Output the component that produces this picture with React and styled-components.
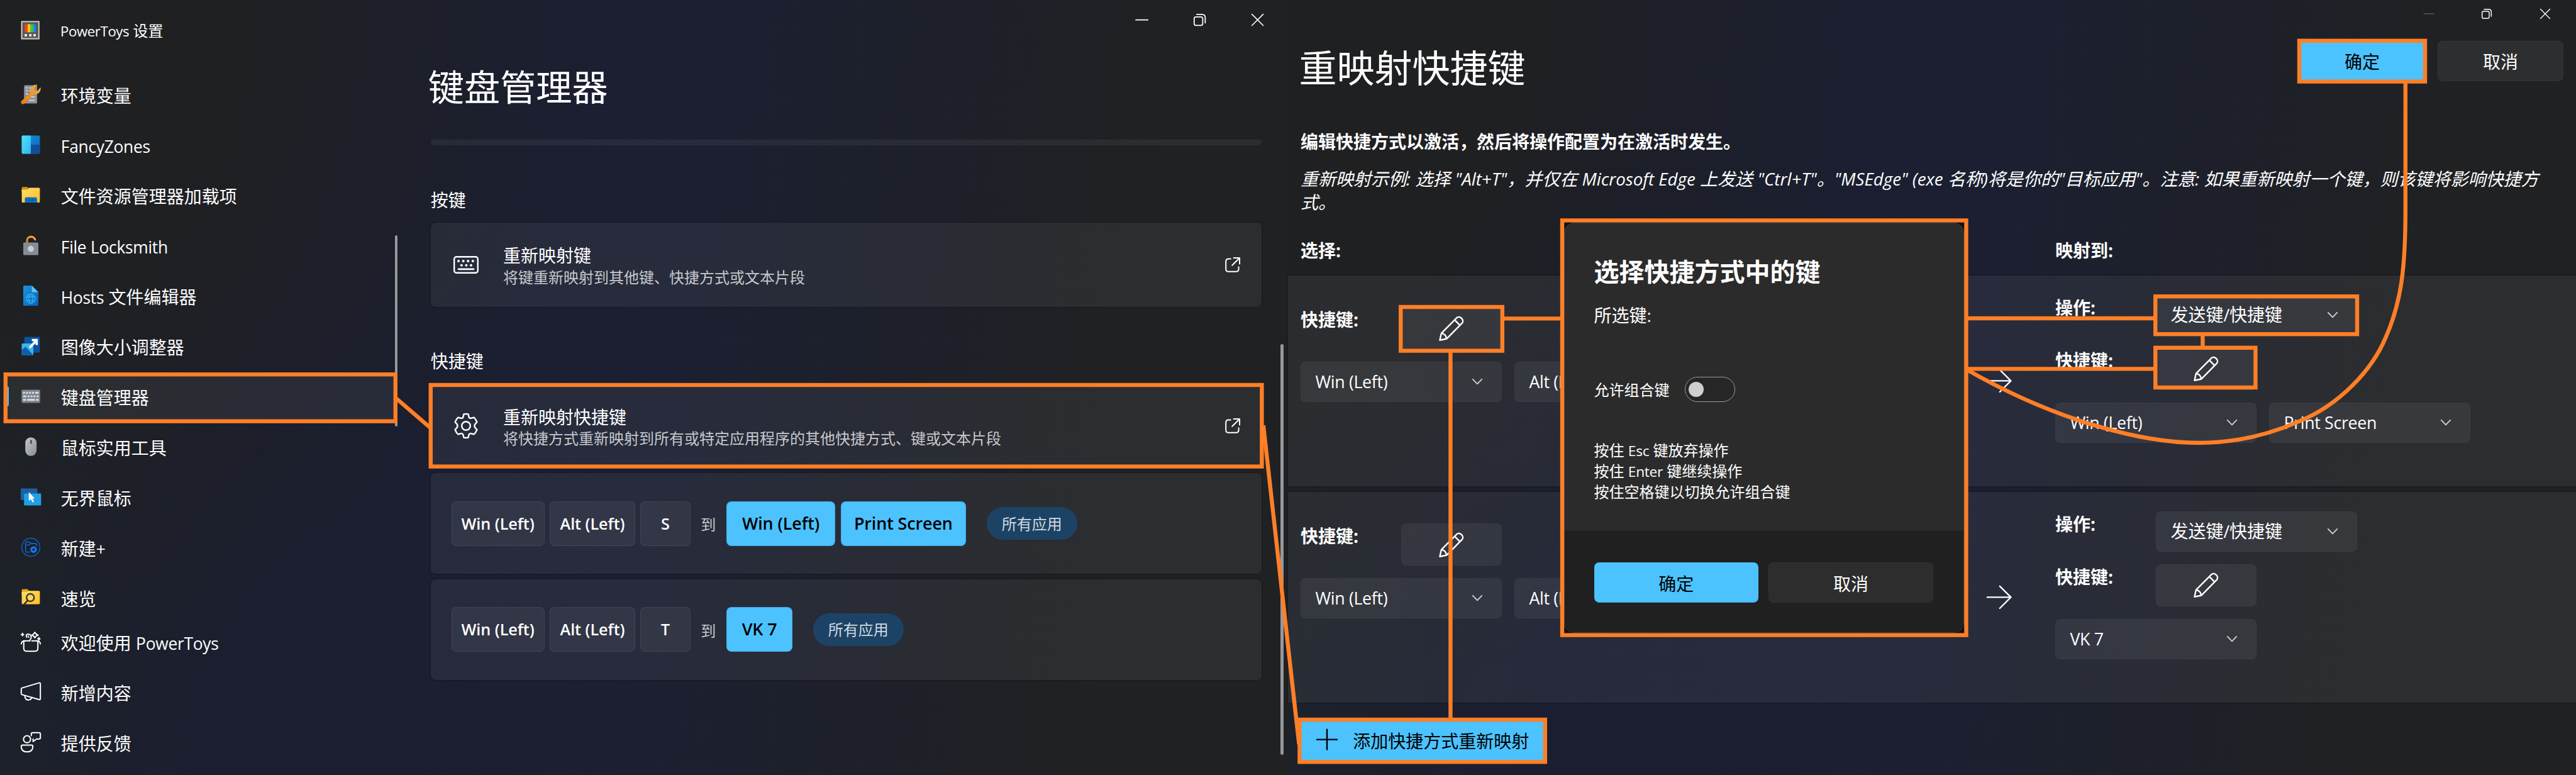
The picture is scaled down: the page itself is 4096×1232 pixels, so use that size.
import React from "react";
import styled, { createGlobalStyle, css } from "styled-components";

/* 1rem = 8px, so every length below is a design pixel divided by ten. */
const Global = createGlobalStyle`
  html { font-size: 8px; }
  body { margin: 0; background: #1f2022; overflow: hidden; }
  * { box-sizing: border-box; }
  button { font: inherit; }
`;

const ORANGE = "#ff7f27";
const BLUE = "#4cc2ff";

const Desktop = styled.div`
  position: relative;
  display: grid;
  grid-template-columns: 256rem 256rem;
  width: 512rem;
  height: 154rem;
  overflow: hidden;
  color: #fff;
  font-family: "Open Sans", "Noto Sans CJK SC", sans-serif;
  font-size: 3.5rem;
  line-height: 4.6rem;
  white-space: nowrap;
`;

const Latin = styled.span`
  font-size: ${(p) => p.$size}em;
  letter-spacing: ${(p) => p.$track}em;
`;

const Label = ({ children, size = 0.945, track = -0.012 }) =>
  children.split(/([\x21-\x7e]+(?: +[\x21-\x7e]+)*)/).map((part, i) =>
    i % 2 ? (
      <Latin key={i} $size={size} $track={track}>
        {part}
      </Latin>
    ) : (
      part
    )
  );

/* ---------- shared ---------- */

const Window = styled.section`
  position: relative;
  display: flex;
  min-width: 0;
  height: 154rem;
  background: radial-gradient(
      ellipse 46% 92% at 0 0,
      #1f2022 35%,
      rgba(31, 32, 34, 0) 100%
    ),
    linear-gradient(
      97deg,
      #1d2228 0%,
      #1c202c 12%,
      #1a1e30 24%,
      #1b1f31 52%,
      #1d202a 68%,
      #202123 85%
    );
`;

const CaptionBar = styled.div`
  display: flex;
  align-items: center;
  justify-content: flex-end;
  height: ${(p) => p.$height}rem;
  gap: ${(p) => p.$gap}rem;
  padding-right: ${(p) => p.$right}rem;
`;

const Glyph = styled.svg`
  display: block;
  flex: none;
  width: ${(p) => p.$w}rem;
  height: ${(p) => p.$h || p.$w}rem;
  fill: none;
  stroke: ${(p) => p.$color || "currentColor"};
  stroke-width: ${(p) => p.$stroke || 2.5};
  stroke-linecap: round;
  stroke-linejoin: round;
  overflow: visible;
`;

const CaptionButtons = ({ size, dim, height, gap, right }) => (
  <CaptionBar $height={height} $gap={gap} $right={right}>
    <Glyph viewBox="0 0 24 24" $w={size} $color={dim ? "#55565a" : "#fff"} $stroke={2.2}>
      <path d="M0 12H24" />
    </Glyph>
    <Glyph viewBox="0 0 24 24" $w={size} $color="#fff" $stroke={2.2}>
      <rect x="1" y="6" width="17" height="17" rx="3.5" />
      <path d="M6 1.2H16.5Q23 1.2 23 8V18" />
    </Glyph>
    <Glyph viewBox="0 0 24 24" $w={size} $color="#fff" $stroke={2}>
      <path d="M.8.8 23.2 23.2M23.2.8.8 23.2" />
    </Glyph>
  </CaptionBar>
);

const ScrollThumb = styled.div`
  flex: none;
  width: 0.55rem;
  height: ${(p) => p.$length}rem;
  margin: ${(p) => p.$top}rem 0 0 ${(p) => p.$left || 0}rem;
  border-radius: 0.3rem;
  background: #97989b;
`;

/* ---------- sidebar ---------- */

const Sidebar = styled.nav`
  display: flex;
  flex: none;
  width: 80rem;
`;

const SidebarColumn = styled.div`
  width: 78.5rem;
`;

const AppTitle = styled.div`
  display: flex;
  align-items: center;
  gap: 3.9rem;
  height: 13.75rem;
  padding: 0 0 1.75rem 4.1rem;
  font-size: 3rem;
`;

const AppName = styled.span`
  padding-top: 0.5rem;
`;

const NavList = styled.div`
  height: ${(p) => p.$height || 30}rem;
`;

const NavItem = styled.div`
  display: flex;
  align-items: center;
  gap: 4rem;
  height: 9rem;
  margin: 0 0 1rem 1rem;
  padding-left: 3.1rem;
  border-radius: 1rem;
  ${(p) =>
    p.$active &&
    css`
      padding-left: 0;
      gap: 0;
      background: rgba(255, 255, 255, 0.06);
    `}
  &:first-child {
    margin-top: 0.5rem;
  }
`;

const ActiveBar = styled.i`
  width: 0.8rem;
  height: 4rem;
  margin-right: 2.3rem;
  border-radius: 0.4rem;
  background: ${BLUE};
`;

const NavText = styled.span`
  padding-top: 0.6rem;
  margin-left: ${(p) => (p.$active ? 4 : 0)}rem;
`;

const Art = styled.svg`
  display: block;
  flex: none;
  width: 4rem;
  height: 4rem;
  overflow: visible;
`;

const Defs = () => (
  <defs>
    <linearGradient id="orange" x1="0" y1="1" x2="1" y2="0">
      <stop offset="0" stopColor="#e97a0c" />
      <stop offset="1" stopColor="#fbb03b" />
    </linearGradient>
    <linearGradient id="cyan" x1="0" y1="0" x2="1" y2="1">
      <stop offset="0" stopColor="#50e2fb" />
      <stop offset="1" stopColor="#2fb4ea" />
    </linearGradient>
    <linearGradient id="blue" x1="0" y1="0" x2="1" y2="1">
      <stop offset="0" stopColor="#1c93e0" />
      <stop offset="1" stopColor="#0a62b8" />
    </linearGradient>
    <linearGradient id="grey" x1="0" y1="0" x2="1" y2="1">
      <stop offset="0" stopColor="#c3c8ce" />
      <stop offset="1" stopColor="#868d95" />
    </linearGradient>
    <linearGradient id="yellow" x1="0" y1="0" x2="1" y2="1">
      <stop offset="0" stopColor="#ffdc6b" />
      <stop offset="1" stopColor="#fcc024" />
    </linearGradient>
    <linearGradient id="rainbow" x1="0" y1="0" x2="1" y2="0">
      <stop offset=".25" stopColor="#e8481c" />
      <stop offset=".25" stopColor="#fdc010" />
      <stop offset=".5" stopColor="#fdd010" />
      <stop offset=".5" stopColor="#5fc43a" />
      <stop offset=".75" stopColor="#45b53a" />
      <stop offset=".75" stopColor="#1d9bf0" />
      <stop offset="1" stopColor="#1279d8" />
    </linearGradient>
  </defs>
);

const LogoArt = () => (
  <Art viewBox="0 0 40 40">
    <Defs />
    <rect x="2" y="3" width="34" height="34" fill="#54575c" stroke="#dbd3c0" strokeWidth="2.4" />
    <rect x="7.5" y="8" width="23" height="16" fill="url(#rainbow)" />
    <path d="M7.5 27.5h5v5h-5zM16.5 27.5h5v5h-5zM25 27.5h5v5h-5z" fill="#e8e0cf" />
  </Art>
);

const WrenchArt = () => (
  <Art viewBox="0 0 40 40">
    <rect x="6.5" y="2" width="26" height="36" rx="2" fill="#8a9199" />
    <path d="M10 7h4M17 7h4M10 13h4M17 13h4M10 19h4M19 25h9M16 32h12" stroke="#c9cdd2" strokeWidth="3" />
    <path
      d="M1.5 33 20 16C17.5 7 24 0 33 .5L27 7V13H33L39.5 6C41 15 34 21.5 25.5 20L7.5 38.5C4 41.5-2 37 1.5 33Z"
      fill="url(#orange)"
    />
  </Art>
);

const ZonesArt = () => (
  <Art viewBox="0 0 40 40">
    <rect x="2" y="2" width="36" height="36" rx="2" fill="url(#blue)" />
    <path d="M20 20H38V36a2 2 0 0 1-2 2H20Z" fill="#0f4f97" />
    <path d="M4 2H20V38H4a2 2 0 0 1-2-2V4a2 2 0 0 1 2-2Z" fill="url(#cyan)" />
  </Art>
);

const FolderArt = () => (
  <Art viewBox="0 0 40 40">
    <path d="M2 6a2 2 0 0 1 2-2H13l4 4V14H2Z" fill="#d9920a" />
    <path d="M2 9.5H13L17 5.5H36a2 2 0 0 1 2 2V33a2 2 0 0 1-2 2H4a2 2 0 0 1-2-2Z" fill="url(#yellow)" />
    <path d="M8 35V28a3.5 3.5 0 0 1 3.5-3.5H29A3.5 3.5 0 0 1 32.5 28V35Z" fill="#0f73c8" />
    <path d="M13 30H28" stroke="#0a4d93" strokeWidth="2" />
  </Art>
);

const LockArt = () => (
  <Art viewBox="0 0 40 40">
    <path d="M12.5 16V10.5C12.5 1 26 .5 28.5 8.5" fill="none" stroke="url(#orange)" strokeWidth="4" strokeLinecap="round" />
    <rect x="5" y="14.5" width="30" height="25" rx="2" fill="#868c93" />
    <circle cx="20" cy="27" r="6" fill="#c9ced6" />
  </Art>
);

const HostsArt = () => (
  <Art viewBox="0 0 40 40">
    <path d="M6 0H22L35 13V38a2 2 0 0 1-2 2H7a2 2 0 0 1-2-2V2Z" fill="url(#blue)" />
    <path d="M22 0 35 13H22Z" fill="#5cc4f5" />
    <g fill="none" stroke="#35aeea" strokeWidth="1.6">
      <circle cx="20" cy="26" r="9" />
      <ellipse cx="20" cy="26" rx="4" ry="9" />
      <path d="M12 22.5H28M12 29.5H28" />
    </g>
  </Art>
);

const ResizeArt = () => (
  <Art viewBox="0 0 40 40">
    <rect x="7" y="2" width="31" height="31" rx="2" fill="#0b529f" />
    <rect x="2" y="15" width="23" height="23" rx="1.5" fill="#3bb5ee" />
    <path d="M2 28 9.5 21.5 25 38H4a2 2 0 0 1-2-2Z" fill="#0d5eae" />
    <path d="M16 22 19 25 29.5 14.5V18H34V6H22V10.5H26.5Z" fill="#fff" />
  </Art>
);

const KeyboardArt = () => (
  <Art viewBox="0 0 40 40">
    <rect x="1.5" y="7" width="37" height="26" rx="2" fill="#7b828b" />
    <path
      d="M4.5 13H8.5M10.5 13H14.5M16.5 13H20.5M22.5 13H26.5M28.5 13H35.5M4.5 20H11.5M13.5 20H17.5M19.5 20H23.5M25.5 20H29.5M31.5 20H35.5M4.5 27H10.5M12.5 27H28.5M30.5 27H35.5"
      stroke="#d4d9df"
      strokeWidth="4"
    />
  </Art>
);

const MouseArt = () => (
  <Art viewBox="0 0 40 40">
    <rect x="9" y="1.5" width="22.5" height="37" rx="11" fill="url(#grey)" />
    <rect x="19" y="6.5" width="3" height="8" rx="1.5" fill="#3d4248" />
  </Art>
);

const BordersArt = () => (
  <Art viewBox="0 0 40 40">
    <rect x="0" y="3" width="33" height="23" rx="1.5" fill="#1d5fa3" />
    <rect x="6.5" y="13" width="34" height="24" rx="1.5" fill="#1fa0e4" />
    <path d="M16 10V28L20 24.5 23.5 31 26.5 29.5 23.5 23H28Z" fill="#f4f7fa" />
  </Art>
);

const NewArt = () => (
  <Art viewBox="0 0 40 40" fill="none">
    <circle cx="20" cy="20" r="18" stroke="#1357b3" strokeWidth="2" />
    <path
      d="M18 29.5H12.5a3 3 0 0 1-3-3V12.5a3 3 0 0 1 3-3H17L20 12.5H28.5a3 3 0 0 1 3 3V18M9.500 15.500H17L20 12.500"
      stroke="#0f6fe8"
      strokeWidth="1.8"
    />
    <circle cx="25.5" cy="24.5" r="6.5" fill="#1479f5" />
    <path d="M25.5 21.5V27.5M22.5 24.5H28.5" stroke="#10182c" strokeWidth="1.8" />
  </Art>
);

const PeekArt = () => (
  <Art viewBox="0 0 40 40">
    <path d="M2 5a2 2 0 0 1 2-2H13l4 4V14H2Z" fill="#e8a512" />
    <path d="M2 8.5H13L16 6.5H36a2 2 0 0 1 2 2V31a2 2 0 0 1-2 2H4a2 2 0 0 1-2-2Z" fill="url(#yellow)" />
    <circle cx="19" cy="20" r="7.5" fill="#f8d469" stroke="#3d3528" strokeWidth="3" />
    <path d="M13.5 26 7 33" stroke="#2c2822" strokeWidth="3" strokeLinecap="round" />
  </Art>
);

const WelcomeGlyph = () => (
  <Glyph viewBox="0 0 40 40" $w={4}>
    <path d="M1 24.5C1.5 20.5 3.5 18.5 8 18.5M32 18.5C36.5 18.5 38.5 20.5 39 24.5" />
    <path d="M6 18.5V33.5Q6 39 11.5 39H28.500Q34 39 34 33.500V18.500M8 18.500H18M22 18.500H32" />
    <path d="M11.5 11C9.500 6.500 13 4 17 5.5C22 7.5 22 13 17.5 18" />
    <path d="M16.500 11.5Q13.5 11.5 15 8.5" strokeWidth="2" />
    <path d="M28 1.5 30.500 5 34.5 7 30.500 9 28 12.5 25.500 9 22 7 25.500 5Z" />
    <path d="M3.5 3.500V8.500M1.200 6H5.800M36 12V17M33.7 14.5H38.3" />
  </Glyph>
);

const MegaphoneGlyph = () => (
  <Glyph viewBox="0 0 40 40" $w={4}>
    <path d="M2.5 12 36 2Q39 1.2 39 4V33Q39 36 36 35L3 25.5Q1 25 1 23V14Q1 12.5 2.5 12Z" />
    <path d="M8 27.5C8.5 34 12 36.5 15.5 36C19 35.5 21 33.5 22 31" />
  </Glyph>
);

const FeedbackGlyph = () => (
  <Glyph viewBox="0 0 40 40" $w={4}>
    <circle cx="12.5" cy="14" r="7" />
    <path d="M3.5 25.5H22Q24 25.5 24 28C24 35 20 39 12.5 39C5 39 1 35 1 28Q1 25.5 3.5 25.5Z" />
    <path d="M21 7V3Q21 .8 23.5 .8H36.5Q39 .8 39 3.5V11Q39 13.5 36.5 13.5H31.5L24.5 18.5V13.5" />
  </Glyph>
);

const navItems = [
  ["环境变量", WrenchArt],
  ["FancyZones", ZonesArt],
  ["文件资源管理器加载项", FolderArt],
  ["File Locksmith", LockArt],
  ["Hosts 文件编辑器", HostsArt],
  ["图像大小调整器", ResizeArt],
  ["键盘管理器", KeyboardArt, true],
  ["鼠标实用工具", MouseArt],
  ["无界鼠标", BordersArt],
  ["新建+", NewArt],
  ["速览", PeekArt],
];

const footerItems = [
  ["欢迎使用 PowerToys", WelcomeGlyph],
  ["新增内容", MegaphoneGlyph],
  ["提供反馈", FeedbackGlyph],
];

const NavRows = ({ items }) =>
  items.map(([text, Icon, active]) => (
    <NavItem key={text} $active={active}>
      {active && <ActiveBar />}
      <Icon />
      <NavText $active={active}>
        <Label>{text}</Label>
      </NavText>
    </NavItem>
  ));

/* ---------- settings page ---------- */

const Page = styled.main`
  width: 176rem;
`;

const PageBody = styled.div`
  display: flex;
  padding-left: 5.6rem;
`;

const PageContent = styled.div`
  width: 165.1rem;
`;

const PageTitle = styled.h1`
  margin: 4.5rem 0 5.4rem -0.5rem;
  font-size: 7.15rem;
  font-weight: 400;
  line-height: 10rem;
`;

const surface = css`
  background: rgba(255, 255, 255, 0.053);
  box-shadow: 0 0 0 0.25rem rgba(0, 0, 0, 0.13);
`;

const ScrolledCard = styled.div`
  height: 1.2rem;
  border-radius: 0 0 0.8rem 0.8rem;
  background: rgba(255, 255, 255, 0.053);
`;

const SectionLabel = styled.h2`
  margin: 0;
  padding: 8.35rem 0 1.95rem;
  font-size: 3.5rem;
  font-weight: 400;
  line-height: 5rem;
`;

const LinkCard = styled.div`
  display: flex;
  align-items: center;
  height: 16.75rem;
  padding: 0 4.2rem 0 4.5rem;
  border-radius: 0.9rem;
  ${surface}
`;

const CardText = styled.div`
  flex: 1;
  padding: 0.5rem 0 0 4.9rem;
  line-height: 4.5rem;
`;

const CardHint = styled.div`
  padding-top: 0.1rem;
  font-size: 3rem;
  line-height: 4rem;
  color: #c6c8cc;
`;

const MappingCard = styled.div`
  display: flex;
  align-items: center;
  height: 20rem;
  margin-top: 1.05rem;
  padding-left: 4.1rem;
  border-radius: 0.9rem;
  ${surface}
`;

const KeyGroup = styled.div`
  display: flex;
  gap: 1.1rem;
`;

const Key = styled.kbd`
  display: flex;
  align-items: center;
  justify-content: center;
  width: ${(p) => p.$w}rem;
  height: 8.9rem;
  border: 0.2rem solid rgba(255, 255, 255, 0.07);
  border-radius: 1rem;
  background: rgba(255, 255, 255, 0.055);
  font-family: inherit;
  font-size: 3.3rem;
  font-weight: 600;
  ${(p) =>
    p.$accent &&
    css`
      border-color: rgba(0, 0, 0, 0.1);
      background: ${BLUE};
      color: #000;
      font-size: 3.5rem;
    `}
`;

const ToText = styled.span`
  margin: 0.6rem 2.1rem 0;
  font-size: 3rem;
  color: #c6c8cc;
`;

const Pill = styled.span`
  display: flex;
  align-items: center;
  justify-content: center;
  width: 18rem;
  height: 6.5rem;
  margin-left: 4.1rem;
  padding-top: 0.2rem;
  border-radius: 3.25rem;
  background: #1c4365;
  color: #d0d8e0;
  font-size: 3rem;
`;

const LaunchGlyph = () => (
  <Glyph viewBox="0 0 30 30" $w={3}>
    <path d="M11 3H7Q1.5 3 1.5 8.5V23Q1.5 28.5 7 28.5H21.5Q27 28.5 27 23V19" />
    <path d="M17 1.2H28.8V13M28.5 1.5 14 16" />
  </Glyph>
);

const KeyboardGlyph = () => (
  <Glyph viewBox="0 0 50 50" $w={5} $stroke={3}>
    <rect x="1.5" y="9" width="47" height="32" rx="4.5" />
    <path d="M10 33.5H40" strokeWidth="3.5" />
    <path d="M10 17.5h.1M19.5 17.5h.1M29 17.5h.1M38.5 17.5h.1M16 26h.1M25.5 26h.1M35 26h.1" strokeWidth="5" />
  </Glyph>
);

const GearGlyph = () => (
  <Glyph viewBox="0 0 50 50" $w={5} $stroke={3}>
    <circle cx="25" cy="25" r="8.5" />
    <path d="M20.500 1.800Q25 .8 29.500 1.800L30.700 7.200Q31.800 10.400 35.200 9.700L40.800 8.200Q44.500 11.500 46.800 17.500L43 21.500Q40.800 25 43 28.500L46.800 32.500Q44.500 38.500 40.800 41.800L35.200 40.300Q31.800 39.600 30.700 42.800L29.500 48.200Q25 49.200 20.500 48.200L19.300 42.800Q18.200 39.600 14.800 40.300L9.200 41.800Q5.500 38.500 3.200 32.500L7 28.500Q9.200 25 7 21.500L3.200 17.500Q5.500 11.500 9.200 8.200L14.800 9.700Q18.200 10.400 19.300 7.200Z" />
  </Glyph>
);

const SettingCard = ({ icon, title, hint }) => (
  <LinkCard>
    {icon}
    <CardText>
      {title}
      <CardHint>{hint}</CardHint>
    </CardText>
    <LaunchGlyph />
  </LinkCard>
);

const KeyCap = ({ text, w, accent }) => (
  <Key $w={w} $accent={accent}>
    <Label size={0.96} track={-0.004}>
      {text}
    </Label>
  </Key>
);

const Mapping = ({ from, to }) => (
  <MappingCard>
    <KeyGroup>
      {from.map(([text, w]) => (
        <KeyCap key={text} text={text} w={w} />
      ))}
    </KeyGroup>
    <ToText>到</ToText>
    <KeyGroup>
      {to.map(([text, w]) => (
        <KeyCap key={text} text={text} w={w} accent />
      ))}
    </KeyGroup>
    <Pill>所有应用</Pill>
  </MappingCard>
);

/* ---------- remap window ---------- */

const Remap = styled.div`
  display: flex;
  flex-direction: column;
  width: 256rem;
`;

const RemapHeader = styled.header`
  display: flex;
  justify-content: space-between;
  height: 20.5rem;
  padding: 2.7rem 2.5rem 0 2.5rem;
`;

const RemapTitle = styled.h1`
  margin: 0.4rem 0 0 -0.3rem;
  font-size: 7.5rem;
  font-weight: 400;
  line-height: 10rem;
`;

const ButtonRow = styled.div`
  display: flex;
  gap: ${(p) => p.$gap}rem;
`;

const Button = styled.button`
  display: flex;
  align-items: center;
  justify-content: center;
  width: ${(p) => p.$w}rem;
  height: 8rem;
  padding: 0.4rem 0 0;
  border: 0.2rem solid rgba(255, 255, 255, 0.03);
  border-radius: 1rem;
  background: ${(p) => (p.$accent ? BLUE : "rgba(255, 255, 255, 0.06)")};
  border-bottom-color: ${(p) => (p.$accent ? "#45a5d8" : "rgba(255, 255, 255, 0.03)")};
  color: ${(p) => (p.$accent ? "#000" : "#fff")};
`;

const Lead = styled.p`
  margin: 0 0 2.8rem 2.5rem;
  font-weight: 700;
`;

const Example = styled.p`
  width: 249rem;
  margin: 0 0 5rem 2.5rem;
  font-style: italic;
`;

const ColumnHeads = styled.div`
  display: flex;
  height: 7.2rem;
  padding-left: 2.5rem;
  font-weight: 700;
`;

const Head = styled.span`
  width: ${(p) => p.$w}rem;
`;

const RemapRow = styled.div`
  display: flex;
  height: 41.9rem;
  margin-bottom: 1.1rem;
  padding-left: 2.5rem;
  ${surface}
`;

const Side = styled.div`
  display: flex;
  flex-direction: column;
  gap: 2.5rem;
  width: ${(p) => p.$w}rem;
  padding-top: ${(p) => p.$top}rem;
`;

const Line = styled.div`
  display: flex;
  gap: 2.5rem;
`;

const Field = styled.div`
  display: flex;
`;

const FieldLabel = styled.span`
  width: 20rem;
  padding-top: 0.3rem;
  font-weight: 700;
`;

const PenButton = styled.div`
  display: flex;
  align-items: center;
  justify-content: center;
  width: 20rem;
  height: 8.4rem;
  border: 0.2rem solid rgba(255, 255, 255, 0.02);
  border-radius: 1rem;
  background: rgba(255, 255, 255, 0.06);
`;

const Combo = styled.div`
  display: flex;
  align-items: center;
  justify-content: space-between;
  width: 40rem;
  height: 8rem;
  padding: 0 3.8rem 0 2.8rem;
  border: 0.2rem solid rgba(255, 255, 255, 0.025);
  border-radius: 1rem;
  background: rgba(255, 255, 255, 0.058);
`;

const ArrowCell = styled.div`
  display: flex;
  align-items: center;
  width: 13.6rem;
`;

const AddButton = styled.div`
  display: flex;
  align-items: center;
  gap: 3.1rem;
  width: 48.9rem;
  height: 8.6rem;
  margin: 2.3rem 0 0 2.3rem;
  padding-left: 3.5rem;
  background: ${BLUE};
  color: #000;
`;

const PencilGlyph = () => (
  <Glyph viewBox="0 0 50 50" $w={5} $stroke={3}>
    <path d="M35.5 4C41-1.5 51.5 8.5 46 14.5L16.5 44.5Q15.5 45.5 14 46L1.8 48.5 4.5 36Q5 34.5 6 33.5Z" />
    <path d="M31.5 8.5 41.5 18.5M5.5 35C10 35 14.5 40 15 44.5" />
  </Glyph>
);

const ComboBox = ({ text }) => (
  <Combo>
    <span>
      <Label size={0.955}>{text}</Label>
    </span>
    <Glyph viewBox="0 0 20 12" $w={2} $h={1.2} $color="#d0d1d5" $stroke={2.3}>
      <path d="M1 1 10 10.5 19 1" />
    </Glyph>
  </Combo>
);

const RemapItem = ({ target }) => (
  <RemapRow>
    <Side $w={136.4} $top={6.3}>
      <Field>
        <FieldLabel>快捷键:</FieldLabel>
        <PenButton>
          <PencilGlyph />
        </PenButton>
      </Field>
      <Line>
        <ComboBox text="Win (Left)" />
        <ComboBox text="Alt (Left)" />
      </Line>
    </Side>
    <ArrowCell>
      <Glyph viewBox="0 0 49 46" $w={4.9} $h={4.6} $stroke={3}>
        <path d="M1 23H48M26 1 48 23 26 45" />
      </Glyph>
    </ArrowCell>
    <Side $w={100} $top={3.9}>
      <Field>
        <FieldLabel>操作:</FieldLabel>
        <ComboBox text="发送键/快捷键" />
      </Field>
      <Field>
        <FieldLabel>快捷键:</FieldLabel>
        <PenButton>
          <PencilGlyph />
        </PenButton>
      </Field>
      <Line>
        {target.map((text) => (
          <ComboBox key={text} text={text} />
        ))}
      </Line>
    </Side>
  </RemapRow>
);

/* ---------- dialog ---------- */

const DialogBackdrop = styled.div`
  position: absolute;
  left: 310.5rem;
  top: 43.8rem;
  width: 80.3rem;
  height: 82.4rem;
  padding: 0.4rem;
  background: #101014;
`;

const Dialog = styled.div`
  display: flex;
  flex-direction: column;
  height: 100%;
  overflow: hidden;
  border: 0.2rem solid #3c3d40;
  border-radius: 2rem;
  background: #2b2b2b;
`;

const DialogBody = styled.div`
  flex: 1;
  padding: 6.2rem 0 0 5.8rem;
`;

const DialogTitle = styled.h2`
  margin: 0;
  font-size: 5rem;
  font-weight: 700;
  line-height: 7rem;
`;

const DialogText = styled.p`
  margin: 2.9rem 0 9.8rem;
`;

const ToggleRow = styled.div`
  display: flex;
  align-items: center;
  gap: 3rem;
  font-size: 3rem;
`;

const ToggleLabel = styled.span`
  padding-top: 0.4rem;
`;

const Toggle = styled.span`
  display: flex;
  align-items: center;
  width: 10rem;
  height: 5rem;
  padding-left: 0.7rem;
  border: 0.2rem solid #9c9c9c;
  border-radius: 2.5rem;
  background: #262626;
  &::before {
    content: "";
    width: 3rem;
    height: 3rem;
    border-radius: 50%;
    background: #cfcfcf;
  }
`;

const DialogHints = styled.div`
  margin-top: 7.7rem;
  font-size: 3rem;
  line-height: 4rem;
`;

const DialogFooter = styled.div`
  display: flex;
  gap: 2rem;
  height: 20.2rem;
  padding: 6.2rem 0 0 5.8rem;
  background: #202020;
  border-top: 0.15rem solid #1c1c1c;
`;

/* ---------- annotations ---------- */

const Annotations = styled.svg`
  position: absolute;
  left: 0;
  top: 0;
  width: 512rem;
  height: 154rem;
  fill: none;
  stroke: ${ORANGE};
  stroke-width: 8;
`;

const frames = [
  [7, 740, 790, 841],
  [852, 761, 2512, 931],
  [2579, 1426, 3075, 1518],
  [2780, 606, 2990, 701],
  [3101, 434, 3912, 1266],
  [4280, 585, 4689, 668],
  [4280, 687, 4487, 774],
  [4566, 77, 4824, 166],
];

export default function App() {
  return (
    <>
      <Global />
      <Desktop>
        <Window>
          <Sidebar>
            <SidebarColumn>
              <AppTitle>
                <LogoArt />
                <AppName>
                  <Label size={0.93} track={-0.02}>
                    PowerToys 设置
                  </Label>
                </AppName>
              </AppTitle>
              <NavList $height={108.25}>
                <NavRows items={navItems} />
              </NavList>
              <NavList>
                <NavRows items={footerItems} />
              </NavList>
            </SidebarColumn>
            <ScrollThumb $top={46.8} $length={37.9} />
          </Sidebar>
          <Page>
            <CaptionButtons height={7.8} size={2.4} gap={9.1} right={4.8} />
            <PageBody>
              <PageContent>
                <PageTitle>键盘管理器</PageTitle>
                <ScrolledCard />
                <SectionLabel>按键</SectionLabel>
                <SettingCard
                  icon={<KeyboardGlyph />}
                  title="重新映射键"
                  hint="将键重新映射到其他键、快捷方式或文本片段"
                />
                <SectionLabel>快捷键</SectionLabel>
                <SettingCard
                  icon={<GearGlyph />}
                  title="重新映射快捷键"
                  hint="将快捷方式重新映射到所有或特定应用程序的其他快捷方式、键或文本片段"
                />
                <Mapping
                  from={[["Win (Left)", 18.5], ["Alt (Left)", 16.9], ["S", 9.9]]}
                  to={[["Win (Left)", 21.6], ["Print Screen", 24.9]]}
                />
                <Mapping
                  from={[["Win (Left)", 18.5], ["Alt (Left)", 16.9], ["T", 9.9]]}
                  to={[["VK 7", 13.1]]}
                />
              </PageContent>
              <ScrollThumb $top={60.6} $length={81.6} $left={3.85} />
            </PageBody>
          </Page>
        </Window>

        <Window>
          <Remap>
            <CaptionButtons height={5.4} size={2} gap={9.6} right={5.1} dim />
            <RemapHeader>
              <RemapTitle>重映射快捷键</RemapTitle>
              <ButtonRow $gap={2.5}>
                <Button $w={25} $accent>
                  确定
                </Button>
                <Button $w={25}>取消</Button>
              </ButtonRow>
            </RemapHeader>
            <Lead>编辑快捷方式以激活，然后将操作配置为在激活时发生。</Lead>
            <Example>
              <Label size={0.99} track={0}>
                {
                  '重新映射示例: 选择 "Alt+T"，并仅在 Microsoft Edge 上发送 "Ctrl+T"。"MSEdge" (exe 名称)将是你的"目标应用"。注意: 如果重新映射一个键，则该键将影响快捷方'
                }
              </Label>
              <br />
              式。
            </Example>
            <ColumnHeads>
              <Head $w={150}>选择:</Head>
              <Head $w={60}>映射到:</Head>
            </ColumnHeads>
            <RemapItem target={["Win (Left)", "Print Screen"]} />
            <RemapItem target={["VK 7"]} />
            <AddButton>
              <Glyph viewBox="0 0 40 40" $w={4} $stroke={3}>
                <path d="M0 17H40M20-3V37" />
              </Glyph>
              添加快捷方式重新映射
            </AddButton>
          </Remap>
        </Window>

        <DialogBackdrop>
          <Dialog>
            <DialogBody>
              <DialogTitle>选择快捷方式中的键</DialogTitle>
              <DialogText>所选键:</DialogText>
              <ToggleRow>
                <ToggleLabel>允许组合键</ToggleLabel>
                <Toggle />
              </ToggleRow>
              <DialogHints>
                <div>
                  <Label>按住 Esc 键放弃操作</Label>
                </div>
                <div>
                  <Label>按住 Enter 键继续操作</Label>
                </div>
                <div>按住空格键以切换允许组合键</div>
              </DialogHints>
            </DialogBody>
            <DialogFooter>
              <Button $w={32.7} $accent>
                确定
              </Button>
              <Button $w={32.7}>取消</Button>
            </DialogFooter>
          </Dialog>
        </DialogBackdrop>

        <Annotations viewBox="0 0 5120 1540">
          {frames.map(([x1, y1, x2, y2]) => (
            <rect key={`${x1}-${y1}`} x={x1 + 4} y={y1 + 4} width={x2 - x1 - 8} height={y2 - y1 - 8} />
          ))}
          <path d="M788 792 854 849M2511 845 2582 1479M2883 700V1428M2988 633H3103" />
          <path d="M3910 632.5H4282M3910 733H4282M4378 666V689" />
          <path d="M4781 164V420C4781 530 4773 600 4742 670C4715 735 4650 805 4568 838C4500 868 4435 880 4370 880C4260 880 4090 838 3910 735" />
        </Annotations>
      </Desktop>
    </>
  );
}
